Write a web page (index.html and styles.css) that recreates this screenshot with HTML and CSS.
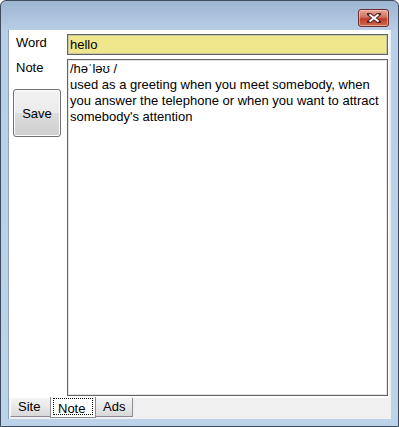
FILE: index.html
```html
<!DOCTYPE html>
<html lang="en">
<head>
    <meta charset="UTF-8">
    <title>Word Note</title>
    <link rel="stylesheet" href="styles.css">
</head>
<body>
    <div class="window">
        <div class="titlebar">
            <button class="close-btn" aria-label="Close">
                <svg width="14" height="10" viewBox="0 0 14 10">
                    <path d="M2 1 L12 9 M12 1 L2 9" stroke="#5a2424" stroke-width="4" stroke-linecap="square"/>
                    <path d="M2.5 1.5 L11.5 8.5 M11.5 1.5 L2.5 8.5" stroke="#ffffff" stroke-width="2"/>
                </svg>
            </button>
        </div>
        <div class="client">
            <div class="page">
                <div class="labels">
                    <span class="label word-label">Word</span>
                    <span class="label note-label">Note</span>
                    <button class="save-btn">Save</button>
                </div>
                <div class="fields">
                    <input type="text" class="word-input" value="hello">
                    <div class="note-box">/həˈləʊ /<br>used as a greeting when you meet somebody, when you answer the telephone or when you want to attract somebody's attention</div>
                </div>
            </div>
            <div class="tabs">
                <div class="tab tab-site">Site</div>
                <div class="tab tab-note active"><span>Note</span></div>
                <div class="tab tab-ads">Ads</div>
            </div>
        </div>
    </div>
</body>
</html>
```

FILE: styles.css
```css
html, body {
    margin: 0;
    padding: 0;
    background: #ffffff;
}
body {
    font-family: 'Liberation Sans', Arial, sans-serif;
    font-size: 13px;
    color: #000000;
}
.window {
    width: 399px;
    height: 427px;
    box-sizing: border-box;
    border: 1px solid #3e4b5d;
    border-radius: 6px 6px 0 0;
    background: linear-gradient(to bottom, #9db5d2 0px, #b9cfe7 30px, #bcd3ea 100%);
    display: flex;
    flex-direction: column;
}
.titlebar {
    height: 29px;
    display: flex;
    justify-content: flex-end;
    align-items: flex-start;
    padding-right: 9px;
}
.close-btn {
    margin-top: 8px;
    width: 31px;
    height: 18px;
    border: 1px solid #6b2e2e;
    border-radius: 3px;
    background: linear-gradient(to bottom, #e4a99c 0%, #d0705f 45%, #bf3a27 55%, #cf6b52 100%);
    padding: 0;
    display: flex;
    align-items: center;
    justify-content: center;
    box-shadow: inset 0 0 0 1px rgba(255, 220, 210, 0.5);
}
.client {
    flex: 1;
    margin: 0 7px 7px 7px;
    background: #f0f0f0;
    border-left: 1px solid #8ea3bd;
    display: flex;
    flex-direction: column;
}
.page {
    flex: 1;
    background: #ffffff;
    margin-right: 2px;
    border-bottom: 1px solid #ffffff;
    display: flex;
    padding: 4px 1px 1px 0;
}
.labels {
    width: 58px;
    display: flex;
    flex-direction: column;
}
.label {
    padding-left: 7px;
    line-height: 15px;
}
.word-label {
    margin-top: 1px;
}
.note-label {
    margin-top: 10px;
}
.save-btn {
    margin: 14px 0 0 4px;
    width: 48px;
    height: 48px;
    border: 1px solid #707070;
    border-radius: 3px;
    background: linear-gradient(to bottom, #f2f2f2 0%, #ebebeb 50%, #dddddd 51%, #cfcfcf 100%);
    font-family: 'Liberation Sans', Arial, sans-serif;
    font-size: 13px;
    color: #000000;
    padding: 0;
    box-shadow: inset 0 0 0 1px #fcfcfc;
}
.fields {
    flex: 1;
    display: flex;
    flex-direction: column;
    gap: 4px;
}
.word-input {
    height: 21px;
    box-sizing: border-box;
    border: 1px solid #646464;
    box-shadow: inset 0 0 0 1px #c8c8a0;
    background: #f0e68c;
    font-family: 'Liberation Sans', Arial, sans-serif;
    font-size: 13px;
    padding: 2px 2px;
    margin: 0;
    outline: none;
}
.note-box {
    flex: 1;
    border: 1px solid #646464;
    box-shadow: inset 0 0 0 1px #e3e3e3;
    padding: 1px 2px;
    line-height: 16px;
}
.tabs {
    height: 21px;
    display: flex;
    padding-left: 1px;
    align-items: flex-start;
}
.tab {
    height: 19px;
    box-sizing: border-box;
    padding: 1px 0 0 7px;
    border: 1px solid #898c95;
    border-top: none;
    border-left-color: #ffffff;
    background: linear-gradient(to bottom, #f4f4f4 0%, #e8e8e8 50%, #d8d8d8 100%);
    line-height: 15px;
    font-size: 13px;
}
.tab-site {
    width: 41px;
}
.tab-ads {
    width: 38px;
}
.tab + .tab {
    margin-left: -1px;
}
.tab.active {
    width: 46px;
    height: 21px;
    margin-top: -1px;
    background: #ffffff;
    border-color: #898c95;
    border-left-color: #898c95;
    padding: 1px 2px 0 2px;
    position: relative;
    z-index: 1;
}
.tab.active span {
    display: block;
    border: 1px dotted #000000;
    padding: 2px 0 0 4px;
    height: 17px;
    box-sizing: border-box;
    line-height: 15px;
}
```
